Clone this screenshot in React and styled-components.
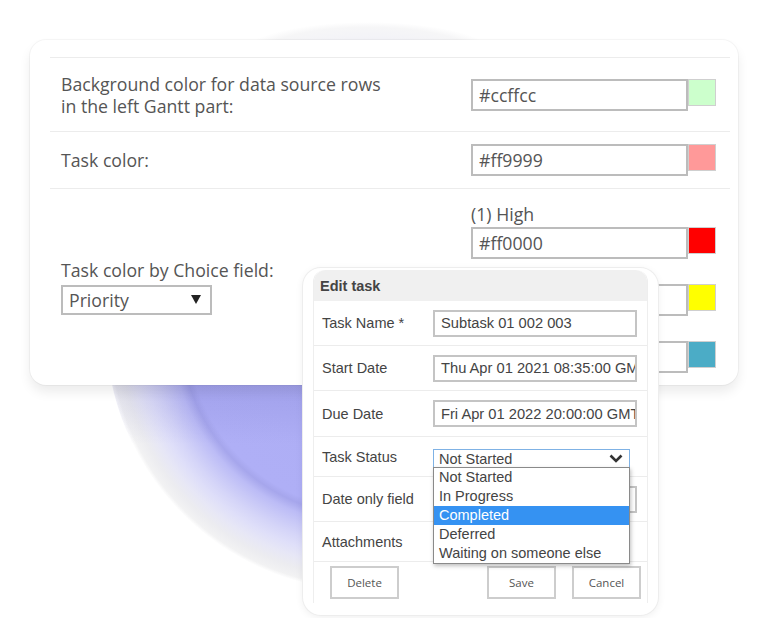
import React from 'react';
import styled, { createGlobalStyle } from 'styled-components';

const GlobalStyle = createGlobalStyle`
  html, body {
    margin: 0;
    padding: 0;
    background: #fff;
  }
  body {
    font-family: "Open Sans", "Liberation Sans", sans-serif;
  }
`;

const Stage = styled.div`
  position: relative;
  width: 768px;
  height: 618px;
  overflow: hidden;
  background: #fff;
  padding-top: 40px;
  box-sizing: border-box;
`;

// decorative purple disc behind the settings card
const Orb = styled.div`
  position: absolute;
  left: 106px;
  top: 67px;
  width: 524px;
  height: 524px;
  border-radius: 50%;
  background:
    linear-gradient(to bottom, rgba(50, 50, 150, 0) 56%, rgba(50, 50, 150, 0.1) 61%, rgba(50, 50, 150, 0) 72%),
    radial-gradient(
      circle closest-side,
      #acacf3 0%,
      #afaff6 69%,
      #a6a6ec 71.5%,
      #bcbcf6 75%,
      #c9c9f7 79%,
      #d5d5f8 83%,
      #dfdff9 87%,
      #e7e7f6 91%,
      #ececf0 95%,
      #f2f2f3 98.5%,
      rgba(244, 244, 244, 0) 100%
    );
`;

const TopGlow = styled.div`
  position: absolute;
  left: 238px;
  top: 22px;
  width: 260px;
  height: 70px;
  border-radius: 50%;
  background: radial-gradient(closest-side, #f0f0f8 0%, #f3f3f7 55%, #f6f6f7 85%, rgba(255, 255, 255, 0) 100%);
`;

const Card = styled.section`
  position: relative;
  margin-left: 30px;
  width: 708px;
  height: 345px;
  box-sizing: border-box;
  background: #fff;
  border-radius: 16px;
  box-shadow: 0 0 0 1px rgba(0, 0, 0, 0.035), 0 7px 12px rgba(0, 0, 0, 0.08);
  padding: 17px 8px 0 20px;
  color: #555;
  font-size: 17.7px;
`;

const SettingRow = styled.div`
  display: grid;
  grid-template-columns: 410px 246px;
  align-items: ${(p) => p.$align || 'center'};
  height: ${(p) => p.$height};
  box-sizing: border-box;
  padding: ${(p) => p.$pad || '0'} 13px 0 11px;
  border-top: 1px solid #ececec;
`;

const Label = styled.div`
  line-height: 22px;
`;

const LabelStack = styled.div`
  display: flex;
  flex-direction: column;
  align-self: center;
  margin-top: -14px;
`;

const ColorField = styled.div`
  display: flex;
  align-items: flex-start;
`;

const HexInput = styled.div`
  width: 217px;
  height: 32px;
  box-sizing: border-box;
  border: 2px solid #bcbcbc;
  padding-left: 6px;
  display: flex;
  align-items: center;
  color: #555;
`;

const Swatch = styled.div`
  width: 28px;
  height: 27px;
  box-sizing: border-box;
  border: 1px solid #cfcfcf;
  background: ${(p) => p.$color};
`;

const ChoiceList = styled.div`
  display: flex;
  flex-direction: column;
`;

const ChoiceLabel = styled.div`
  height: 25px;
  line-height: 25px;
`;

const PrioritySelect = styled.div`
  margin-top: 4px;
  width: 151px;
  height: 30px;
  box-sizing: border-box;
  border: 2px solid #bcbcbc;
  padding: 0 9px 0 6px;
  display: flex;
  align-items: center;
  justify-content: space-between;
`;

/* ---------- dialog ---------- */

const Dialog = styled.div`
  position: absolute;
  left: 303px;
  top: 268px;
  width: 355px;
  height: 347px;
  box-sizing: border-box;
  background: #fff;
  border-radius: 18px;
  box-shadow: 0 0 0 1px #ededed, 0 2px 8px rgba(0, 0, 0, 0.07);
  padding: 2px 10px 0;
  font-family: "Liberation Sans", Arial, sans-serif;
  color: #444;
  font-size: 14.5px;
`;

const Panel = styled.div`
  border-left: 1px solid #eeeeee;
  border-right: 1px solid #eeeeee;
  border-radius: 12px 12px 0 0;
`;

const DialogHeader = styled.div`
  height: 31px;
  background: #f0f0f0;
  border-radius: 12px 12px 0 0;
  display: flex;
  align-items: center;
  padding-left: 6px;
  font-weight: bold;
  font-size: 14.5px;
  color: #444;
`;

const FormRow = styled.div`
  position: relative;
  display: grid;
  grid-template-columns: 111px 204px;
  align-items: center;
  height: ${(p) => p.$height}px;
  box-sizing: border-box;
  padding-left: 8px;
  border-bottom: 1px solid #ececec;
  z-index: ${(p) => p.$z || 0};
`;

const TextBox = styled.div`
  height: 27px;
  box-sizing: border-box;
  border: 2px solid #c4c4c4;
  padding-left: 6px;
  display: flex;
  align-items: center;
  white-space: nowrap;
  overflow: hidden;
  font-size: 14.7px;
  color: #444;
`;

const StatusField = styled.div`
  position: relative;
  width: 197px;
  margin-top: 4px;
`;

const StatusSelect = styled.div`
  height: 19px;
  box-sizing: border-box;
  border: 1px solid #7fb2e5;
  padding: 0 6px 0 5px;
  display: flex;
  align-items: center;
  justify-content: space-between;
  color: #444;
`;

const OptionList = styled.ul`
  position: absolute;
  left: 0;
  top: 18px;
  width: 197px;
  margin: 0;
  padding: 0;
  list-style: none;
  background: #fff;
  border: 1px solid #8a8a8a;
  box-sizing: border-box;
  box-shadow: 1px 2px 4px rgba(0, 0, 0, 0.25);
  z-index: 5;
`;

const Option = styled.li`
  height: 19px;
  line-height: 19px;
  padding-left: 5px;
  background: ${(p) => (p.$selected ? '#3592f2' : '#fff')};
  color: ${(p) => (p.$selected ? '#fff' : '#444')};
`;

const ButtonBar = styled.div`
  display: flex;
  align-items: center;
  height: 41px;
  padding: 0 6px 0 16px;
`;

const Spacer = styled.div`
  flex: 1;
`;

const Button = styled.div`
  width: 69px;
  height: 33px;
  box-sizing: border-box;
  border: 2px solid #cdcdcd;
  background: #fff;
  display: flex;
  align-items: center;
  justify-content: center;
  font-family: "Open Sans", sans-serif;
  font-size: 11.5px;
  color: #555;
  margin-left: ${(p) => (p.$gap ? '16px' : '0')};
`;

// only the first choice caption is visible, the others sit under the dialog
const choices = [
  { label: '(1) High', hex: '#ff0000' },
  { label: '', hex: '#ffff00' },
  { label: '', hex: '#4bacc6' },
];

const statuses = ['Not Started', 'In Progress', 'Completed', 'Deferred', 'Waiting on someone else'];

const Caret = () => (
  <svg width="10" height="9" viewBox="0 0 10 9">
    <polygon points="0,0 10,0 5,9" fill="#222" />
  </svg>
);

const Chevron = () => (
  <svg width="14" height="9" viewBox="0 0 14 9">
    <polyline points="1.5,1.5 7,7 12.5,1.5" fill="none" stroke="#333" strokeWidth="2.6" />
  </svg>
);

export default function App() {
  return (
    <Stage>
      <GlobalStyle />
      <TopGlow />
      <Orb />
      <Card>
        <SettingRow $height="74px">
          <Label>
            Background color for data source rows
            <br />
            in the left Gantt part:
          </Label>
          <ColorField>
            <HexInput>#ccffcc</HexInput>
            <Swatch $color="#ccffcc" />
          </ColorField>
        </SettingRow>
        <SettingRow $height="57px">
          <Label>Task color:</Label>
          <ColorField>
            <HexInput>#ff9999</HexInput>
            <Swatch $color="#ff9999" />
          </ColorField>
        </SettingRow>
        <SettingRow $height="197px" $align="start" $pad="13px">
          <LabelStack>
            <Label>Task color by Choice field:</Label>
            <PrioritySelect>
              <span>Priority</span>
              <Caret />
            </PrioritySelect>
          </LabelStack>
          <ChoiceList>
            {choices.map((c) => (
              <React.Fragment key={c.hex}>
                <ChoiceLabel>{c.label}</ChoiceLabel>
                <ColorField>
                  <HexInput>{c.hex}</HexInput>
                  <Swatch $color={c.hex} />
                </ColorField>
              </React.Fragment>
            ))}
          </ChoiceList>
        </SettingRow>
      </Card>

      <Dialog>
        <Panel>
          <DialogHeader>Edit task</DialogHeader>
          <FormRow $height={45}>
            <span>Task Name *</span>
            <TextBox>Subtask 01 002 003</TextBox>
          </FormRow>
          <FormRow $height={45}>
            <span>Start Date</span>
            <TextBox>Thu Apr 01 2021 08:35:00 GMT</TextBox>
          </FormRow>
          <FormRow $height={46}>
            <span>Due Date</span>
            <TextBox>Fri Apr 01 2022 20:00:00 GMT</TextBox>
          </FormRow>
          <FormRow $height={40} $z={3}>
            <span>Task Status</span>
            <StatusField>
              <StatusSelect>
                <span>Not Started</span>
                <Chevron />
              </StatusSelect>
              <OptionList>
                {statuses.map((s) => (
                  <Option key={s} $selected={s === 'Completed'}>
                    {s}
                  </Option>
                ))}
              </OptionList>
            </StatusField>
          </FormRow>
          <FormRow $height={45}>
            <span>Date only field</span>
            <TextBox />
          </FormRow>
          <FormRow $height={40}>
            <span>Attachments</span>
          </FormRow>
          <ButtonBar>
            <Button>Delete</Button>
            <Spacer />
            <Button>Save</Button>
            <Button $gap>Cancel</Button>
          </ButtonBar>
        </Panel>
      </Dialog>
    </Stage>
  );
}
